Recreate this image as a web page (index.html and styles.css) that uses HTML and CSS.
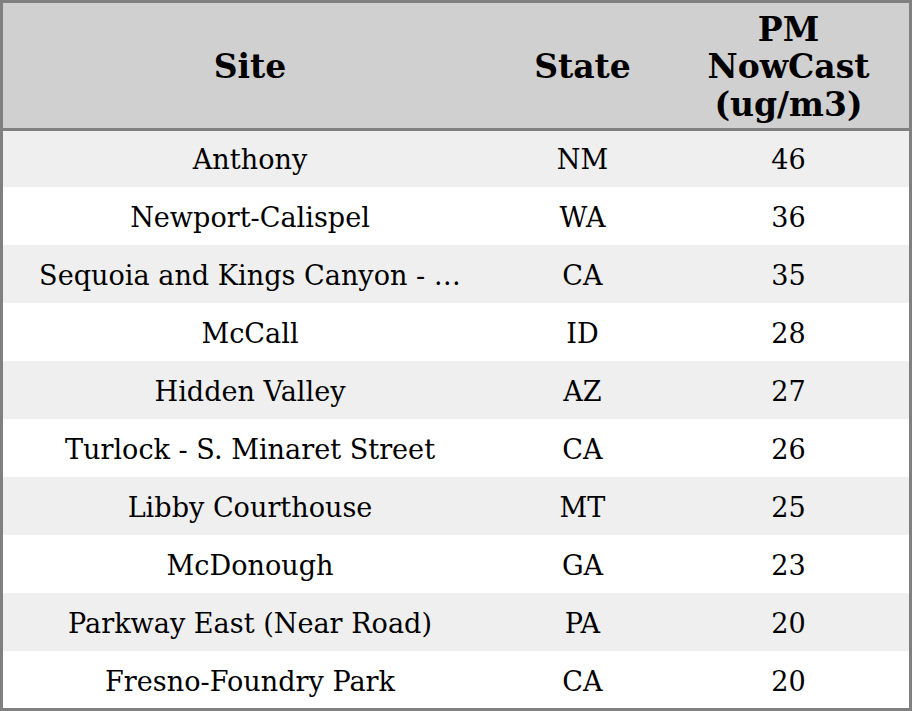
FILE: index.html
```html
<!DOCTYPE html>
<html>
<head>
<meta charset="utf-8">
<link rel="stylesheet" href="styles.css">
</head>
<body>
<div class="frame">
<table class="grid">
<colgroup>
<col class="c-site">
<col class="c-state">
<col class="c-pm">
</colgroup>
<thead>
<tr class="head"><th>Site</th><th>State</th><th>PM<br>NowCast<br>(ug/m3)</th></tr>
</thead>
<tbody>
<tr class="odd"><td>Anthony</td><td>NM</td><td>46</td></tr>
<tr><td>Newport-Calispel</td><td>WA</td><td>36</td></tr>
<tr class="odd"><td>Sequoia and Kings Canyon - …</td><td>CA</td><td>35</td></tr>
<tr><td>McCall</td><td>ID</td><td>28</td></tr>
<tr class="odd"><td>Hidden Valley</td><td>AZ</td><td>27</td></tr>
<tr><td>Turlock - S. Minaret Street</td><td>CA</td><td>26</td></tr>
<tr class="odd"><td>Libby Courthouse</td><td>MT</td><td>25</td></tr>
<tr><td>McDonough</td><td>GA</td><td>23</td></tr>
<tr class="odd"><td>Parkway East (Near Road)</td><td>PA</td><td>20</td></tr>
<tr><td>Fresno-Foundry Park</td><td>CA</td><td>20</td></tr>
</tbody>
</table>
</div>
</body>
</html>
```
FILE: styles.css
```css
html, body {
  margin: 0;
  padding: 0;
  background: #ffffff;
}
.frame {
  width: 912px;
  height: 711px;
  box-sizing: border-box;
  border: 3px solid #808080;
  overflow: hidden;
}
.grid {
  width: 906px;
  border-collapse: collapse;
  table-layout: fixed;
  font-family: "DejaVu Serif", serif;
  color: #000;
}
.c-site { width: 494px; }
.c-state { width: 171px; }
.c-pm { width: 241px; }
.head {
  background: #d0d0d0;
  height: 126px;
}
.head th {
  font-size: 33px;
  font-weight: bold;
  line-height: 37.5px;
  text-align: center;
  vertical-align: middle;
  padding: 3px 0 0 0;
  border-bottom: 3px solid #808080;
}
tbody tr {
  height: 58px;
}
tbody tr.odd {
  background: #efefef;
}
tbody td {
  font-size: 27.1px;
  text-align: center;
  vertical-align: middle;
  padding: 2px 8px 0 8px;
  white-space: nowrap;
  overflow: hidden;
}
```
